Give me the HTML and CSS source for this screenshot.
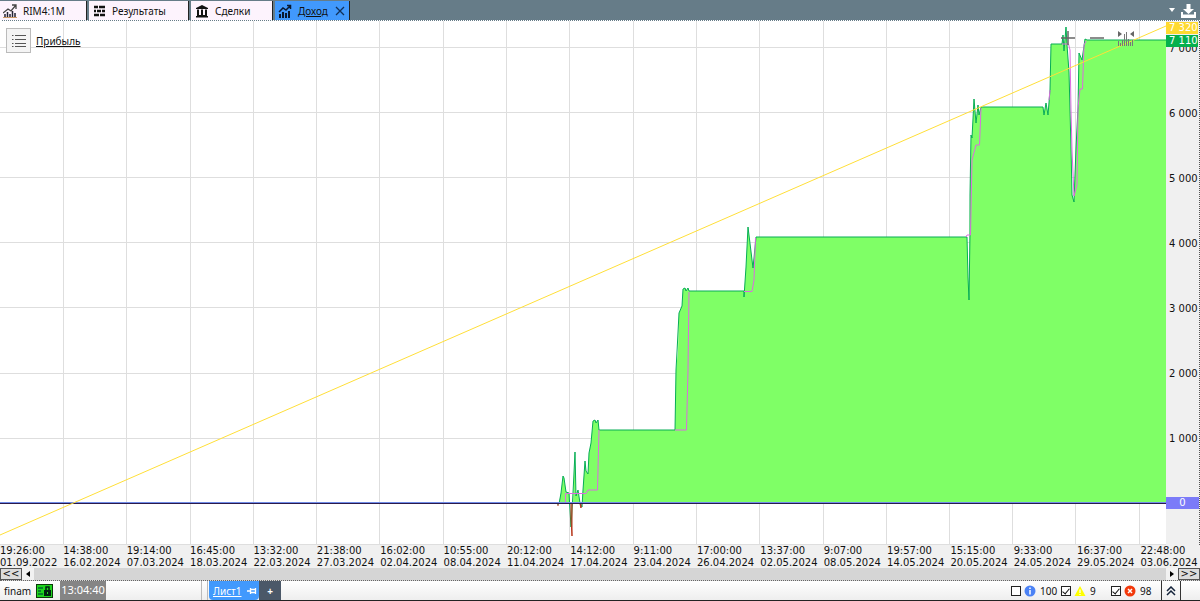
FILE: index.html
```html
<!DOCTYPE html>
<html lang="ru">
<head>
<meta charset="utf-8">
<title>Доход</title>
<link rel="stylesheet" href="styles.css">
</head>
<body>
<header class="topbar">
  <nav class="tabs">
    <a class="tab" href="#chart"><svg class="ico" viewBox="0 0 14 14"><path d="M0 9l5-4 3 2 5-6M9 1h4v4" fill="none" stroke="#444" stroke-width="1.300"/><path d="M2 10v3M4.500 8v5M7 10v3M9.500 7v6M12 9v4" stroke="#223" stroke-width="1.500"/><path d="M0 13.500h14" stroke="#c96"/></svg><span>RIM4:1M</span></a>
    <a class="tab tab-wide" href="#results"><svg class="ico" viewBox="0 0 14 14"><path d="M2 3h4M7 3h6M2 7h2M5 7h4M10 7h3M2 11h5M8 11h5" stroke="#111" stroke-width="2.500"/></svg><span>Результаты</span></a>
    <a class="tab tab-deals" href="#deals"><svg class="ico" viewBox="0 0 14 14"><path d="M7 1l6 3v1H1V4zM1 12h12v1.500H1zM2 11h10v1H2z" fill="#111"/><path d="M3 5.500V11M7 5.500V11M11 5.500V11" stroke="#111" stroke-width="2"/></svg><span>Сделки</span></a>
    <a class="tab tab-active" href="#income"><svg class="ico" viewBox="0 0 14 14"><path d="M1 8l4-4 3 2 4-4M9 1.500h3.500V5" fill="none" stroke="#0a1a30" stroke-width="1.500"/><path d="M2 10v4M5 8v6M8 9v5M11 7v7" stroke="#0a1a30" stroke-width="2"/></svg><span>Доход</span><svg class="close" viewBox="0 0 10 10"><path d="M1 1l8 8M9 1L1 9" stroke="#12315a" stroke-width="1.300"/></svg></a>
  </nav>
  <div class="tools">
    <button class="plain" aria-label="Список вкладок"><svg class="caret" viewBox="0 0 6 4"><path d="M0 0h6L3 4z" fill="#fff"/></svg></button>
    <button class="plain" aria-label="Сохранить"><svg class="save" viewBox="0 0 15 15"><path d="M5.500 1h4v5H13L7.500 11 2 6h3.500z" fill="#fff"/><path d="M1 9v5h13V9" fill="none" stroke="#fff" stroke-width="2"/><path d="M1 12.500h13" stroke="#fff" stroke-width="2"/></svg></button>
  </div>
</header>

<main class="workspace">
  <section class="plot">
    <svg class="chart" viewBox="0 21 1166 524" preserveAspectRatio="none">
      <path class="grid" d="M63 21V544M126 21V544M190 21V544M253 21V544M316 21V544M379 21V544M443 21V544M506 21V544M569 21V544M633 21V544M696 21V544M759 21V544M823 21V544M886 21V544M949 21V544M1012 21V544M1075 21V544M1139 21V544M0 47H1166M0 112H1166M0 177H1166M0 242H1166M0 307H1166M0 373H1166M0 438H1166M0 544H1166"/>
      <path class="area" d="M559 503L561 493L563 476L564 478L566 492L569 493L570 503H573L575 452L576 496L578 490L580 503H582L583 490L585 461L586 471L588 474L589 453L591 443L593 421L595 420L596 423L598 420L599 430H675L676 370L678 352L679 313L682 306L683 289L685 288L686 291L688 288L689 291H744V297L746 267L748 227L753 268L754 258L756 237H967L968 277L969 300L970 195L971 135L972 138L974 99L976 123L978 105L979 115L981 107H1043L1044 115L1046 103L1048 115L1050 90L1051 44H1062L1063 35L1064 51L1066 27L1067 45L1069 72L1071 148L1072 195L1074 202L1076 148L1078 108L1079 53L1082 60L1085 39L1087 40H1166V503Z"/>
      <path class="profit" d="M557 504H559L561 493L563 476L564 478L566 492L569 493L571 527L573 493L575 452L576 496L578 490L580 503L582 507L583 490L585 461L586 471L588 474L589 453L591 443L593 421L595 420L596 423L598 420L599 430H675L676 370L677 352L679 313L682 306L683 289L685 288L686 291L688 288L689 291H744V297L746 267L748 227L753 268L754 258L756 237H967L968 277L969 300L970 233V195L971 135L972 138L974 99L976 123L978 105L979 115L981 107H1043L1044 115L1046 103L1048 115L1050 90L1051 44H1062L1063 35L1064 51L1066 27L1067 45L1069 72L1071 148L1072 195L1074 202L1076 148L1078 108L1079 53L1082 60L1085 39L1087 40H1166"/>
      <path class="trail" d="M565.500 503V493.500H586L588 490H597.500L599 430M675 430H686.500L688 370L689 292M744 291.500H752L754 280L755.500 238M966 237L967 235H970.500L972 160L976 145H979.500L981 108M1050 90L1049 100M1062 44H1068.500L1070 50L1071 110L1072 150L1074 196L1077 185L1078 108L1080 89H1082.500L1084 45L1086 41"/>
      <path class="loss" d="M571 504V520L572 536V504M558 504V506M580 504L581 508V504"/>
      <path class="zero-glow" d="M0 502.500H1166"/>
      <path class="zero" d="M0 503.500H1166"/>
      <path class="trend" d="M0 535L1166 26"/>
    </svg>
    <div class="legend">
      <button class="list-btn" aria-label="Список"><svg viewBox="0 0 16 14"><path d="M4 1.500h11M4 5.500h11M4 9.500h11M4 12.500h11" stroke="#555"/><path d="M1 1.500h1.500M1 5.500h1.500M1 9.500h1.500M1 12.500h1.500" stroke="#555"/></svg></button>
      <a href="#profit">Прибыль</a>
    </div>
    <div class="zoom-tools">
      <button class="plain" aria-label="Увеличить"><svg class="zi" viewBox="0 0 16 16"><path d="M1 8h14M8 1v14" stroke="#666" stroke-width="1.500"/></svg></button>
      <button class="plain" aria-label="Уменьшить"><svg class="zi" viewBox="0 0 16 16"><path d="M1 8h14" stroke="#666" stroke-width="1.500"/></svg></button>
      <button class="plain" aria-label="По ширине"><svg class="zi" viewBox="0 0 16 16"><path d="M0 1l4 3-4 3zM16 1l-4 3 4 3z" fill="#666"/><path d="M.5 16v-5M2.500 16v-3M4.500 16V10M6.500 16V4M8.500 16V2M10.500 16V9M12.500 16v-4M14.500 16v-6" stroke="#777"/></svg></button>
    </div>
  </section>
  <aside class="scale">
    <span class="tick">7 000</span><span class="tick">6 000</span><span class="tick">5 000</span><span class="tick">4 000</span><span class="tick">3 000</span><span class="tick">2 000</span><span class="tick">1 000</span><span class="tick tick-zero"><b>0</b></span>
    <div class="tags"><b class="tag-yellow">7 320</b><b class="tag-green">7 110</b></div>
  </aside>
</main>

<div class="times">
  <div>19:26:00<br>01.09.2022</div><div>14:38:00<br>16.02.2024</div><div>19:14:00<br>07.03.2024</div><div>16:45:00<br>18.03.2024</div><div>13:32:00<br>22.03.2024</div><div>21:38:00<br>27.03.2024</div><div>16:02:00<br>02.04.2024</div><div>10:55:00<br>08.04.2024</div><div>20:12:00<br>11.04.2024</div><div>14:12:00<br>17.04.2024</div><div>9:11:00<br>23.04.2024</div><div>17:00:00<br>26.04.2024</div><div>13:37:00<br>02.05.2024</div><div>9:07:00<br>08.05.2024</div><div>19:57:00<br>14.05.2024</div><div>15:15:00<br>20.05.2024</div><div>9:33:00<br>24.05.2024</div><div>16:37:00<br>29.05.2024</div><div>22:48:00<br>03.06.2024</div>
</div>

<div class="scroller">
  <button class="jump">&lt;&lt;</button>
  <button class="arrow" aria-label="Влево"><svg viewBox="0 0 4 6"><path d="M4 0v6L0 3z"/></svg></button>
  <div class="track"></div>
  <button class="arrow" aria-label="Вправо"><svg viewBox="0 0 4 6"><path d="M0 0v6l4-3z"/></svg></button>
  <button class="jump">&gt;&gt;</button>
</div>

<footer class="status">
  <span class="account">finam</span>
  <svg class="link" viewBox="0 0 17 14"><path d="M0 0h17v14H0z" fill="#0a3a0a"/><path d="M1 1h15v12H1z" fill="#1fd51f"/><path d="M2 4h5M2 7h3M2 10h5" stroke="#063" stroke-width="1.500"/><path d="M8 6h7v6H8z" fill="#021"/><path d="M10 6V3h3v3" fill="none" stroke="#021" stroke-width="1.500"/><path d="M11 8h1v2h-1z" fill="#1fd51f"/></svg>
  <time class="clock">13:04:40</time>
  <span class="grip"></span>
  <a class="sheet" href="#sheet1"><span>Лист1</span><svg viewBox="0 0 10 8"><path d="M0 4h3M3.500 1v6M3 2.500h5M3 5.500h5M8.500 1v6" fill="none" stroke="#fff" stroke-width="1.300"/></svg></a>
  <button class="add" aria-label="Добавить лист">+</button>
  <div class="filters">
    <label class="filter"><input type="checkbox"><svg viewBox="0 0 12 12"><circle cx="6" cy="6" r="5.500" fill="#4b82f5"/><path d="M6 2.500V4M6 5v4.500" stroke="#fff" stroke-width="1.500"/></svg>100</label>
    <label class="filter"><input type="checkbox" checked><svg viewBox="0 0 12 12"><path d="M6 1l5.500 10H.5z" fill="#ff0"/><path d="M6 4.500V8M6 9v1" stroke="#fff" stroke-width="1.200"/></svg>9</label>
    <label class="filter"><input type="checkbox" checked><svg viewBox="0 0 12 12"><circle cx="6" cy="6" r="5.500" fill="#f2380a"/><path d="M4 4l4 4M8 4L4 8" stroke="#fff" stroke-width="1.500"/></svg>98</label>
  </div>
  <button class="expand" aria-label="Развернуть"><svg viewBox="0 0 10 10"><path d="M1 5l4-4 4 4M1 9l4-4 4 4" fill="none" stroke="#14233a" stroke-width="1.500"/></svg></button>
</footer>
</body>
</html>
```
FILE: styles.css
```css
* { box-sizing: border-box; }
body {
  margin: 0;
  height: 100vh;
  display: flex;
  flex-direction: column;
  overflow: hidden;
  background: #f0f0f0;
  color: #111;
  font: 10px/12px "DejaVu Sans", sans-serif;
}
a { color: inherit; }
button { padding: 0; border: 0; background: none; font: inherit; color: inherit; display: flex; align-items: center; justify-content: center; }
svg { display: block; flex: none; }

.topbar { display: flex; justify-content: space-between; height: 21px; background: #667c88; border-bottom: 1px dotted #fff; flex: none; }
.tabs { display: flex; gap: 2px; padding-top: 1px; font: 10px/20px "Noto Sans", sans-serif; }
.tab { display: flex; align-items: center; gap: 6px; width: 87px; padding: 0 3px; background: #fdf3fd; border-right: 1px solid #222; text-decoration: none; }
.tab-wide { width: 100px; }
.tab-deals { width: 82px; padding-left: 4px; }
.tab-active { width: 75px; background: #4199fd; }
.tab-active span { text-decoration: underline; }
.ico { width: 14px; height: 14px; }
.close { width: 10px; height: 10px; margin-left: 1px; }
.tools { display: flex; gap: 6px; padding-right: 4px; }
.caret { width: 6px; height: 4px; }
.save { width: 15px; height: 15px; }

.workspace { flex: 1; display: flex; min-height: 0; }
.plot { flex: 1; position: relative; background: #fff; min-width: 0; }
.chart { width: 100%; height: 100%; }
.chart path { fill: none; stroke-width: 1; }
.chart .grid { stroke: #dedede; shape-rendering: crispEdges; }
.chart .area { fill: #7fff66; }
.chart .trail { stroke: #dd6be0; }
.chart .profit { stroke: #06ad55; }
.chart .loss { stroke: #b63418; }
.chart .zero { stroke: #2a1a4c; shape-rendering: crispEdges; }
.chart .zero-glow { stroke: #6f8ce8; shape-rendering: crispEdges; }
.chart .trend { stroke: #ffdf38; }
.legend { position: absolute; top: 7px; left: 6px; display: flex; align-items: center; gap: 5px; font: 10px/14px "Noto Sans", sans-serif; }
.list-btn { width: 25px; height: 25px; border: 1px solid #bbb; background: #f4f4f4; }
.list-btn svg { width: 16px; height: 14px; }
.zoom-tools { position: absolute; top: 9px; right: 32px; display: flex; gap: 13px; }
.zi { width: 16px; height: 16px; }
.scale { position: relative; flex: none; width: 34px; padding-top: 21px; display: flex; flex-direction: column; border-right: 1px dotted #555; }
.tick { flex: 65 0 0; padding-left: 3px; line-height: 14px; white-space: nowrap; }
.tick-zero { flex: 48 0 0; padding: 0; text-align: center; }
.tick-zero b { display: block; line-height: 12px; font-weight: 400; background: #7b7bf8; color: #fff; }
.tags { position: absolute; top: 1px; left: 0; right: 1px; color: #fff; }
.tags b { display: block; padding-left: 3px; line-height: 12px; font-weight: 400; white-space: nowrap; }
.tag-yellow { background: #ffda30; }
.tag-green { background: #05b04d; margin-top: 1px; }

.times { flex: none; display: flex; overflow: hidden; height: 23px; }
.times div { flex: 0 0 5.28%; white-space: nowrap; }

.scroller { flex: none; display: flex; height: 13px; background: #d5d5d5; border-bottom: 1px dotted #666; }
.jump { width: 22px; border: 1px solid #555; background: #dcdcdc; line-height: 10px; }
.arrow { width: 12px; background: #f2f2f2; }
.arrow svg { width: 4px; height: 6px; }
.track { flex: 1; }

.status { flex: none; display: flex; align-items: center; height: 20px; background: linear-gradient(#fff, #eee); border-bottom: 1px solid #222; font: 10px/18px "Noto Sans", sans-serif; }
.account { width: 36px; padding-left: 4px; }
.link { width: 17px; height: 14px; }
.clock { width: 46px; margin-left: 7px; align-self: stretch; background: #858585; color: #fff; text-align: center; font-size: 11px; }
.grip { width: 7px; height: 19px; margin-left: 95px; border-left: 1px solid #bbb; border-right: 1px solid #bbb; }
.sheet { display: flex; align-items: center; gap: 5px; width: 50px; height: 19px; margin-left: 1px; padding-left: 4px; border-radius: 0 0 4px 4px; background: #4199fd; color: #fff; }
.sheet svg { width: 10px; height: 8px; }
.add { width: 22px; height: 19px; background: #4b5868; color: #fff; font-weight: 700; }
.filters { display: flex; margin-left: auto; }
.filter { display: flex; align-items: center; width: 50px; }
.filters input { appearance: none; display: flex; justify-content: center; width: 10px; height: 10px; margin: 0 3px 0 0; border: 1px solid #222; background: #fff; }
.filters input:checked::before { content: ""; width: 3px; height: 6px; border: solid #111; border-width: 0 1px 1px 0; transform: rotate(40deg); }
.filters svg { width: 12px; height: 12px; margin-right: 4px; }
.expand { width: 20px; height: 19px; border-left: 1px solid #333; border-right: 1px solid #333; margin-right: 19px; }
.expand svg { width: 10px; height: 10px; }
```
